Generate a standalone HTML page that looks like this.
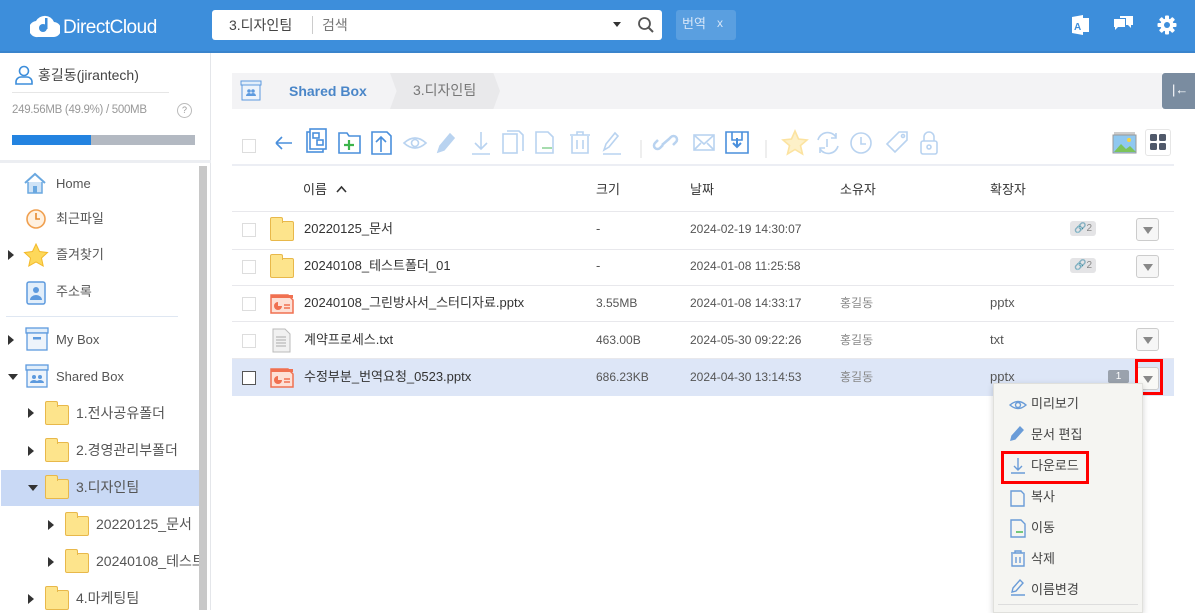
<!DOCTYPE html>
<html><head><meta charset="utf-8"><style>
*{box-sizing:border-box;margin:0;padding:0}
body{width:1195px;height:610px;overflow:hidden;background:#fff;font-family:"Liberation Sans","Noto Sans CJK KR",sans-serif;color:#333;position:relative;font-size:13px}
.abs{position:absolute}
.hdr{left:0;top:0;width:1195px;height:53px;background:#3d8edb;border-bottom:2px solid #3a84cc}
.search{left:212px;top:10px;width:450px;height:30px;background:#fff;border-radius:3px}
.side{left:0;top:53px;width:211px;height:557px;border-right:1px solid #e4e6ea}
.t{position:absolute;white-space:nowrap;line-height:1.15}
.row{position:absolute;left:232px;width:942px;border-bottom:1px solid #e8e8ec}
.cb{position:absolute;width:14px;height:14px;border:1px solid #ccc;background:#fff}
.dd{position:absolute;left:1136px;width:23px;height:23px;border:1px solid #ccc;border-radius:3px;background:#f6f6f6}
.dd:after{content:"";position:absolute;left:6px;top:8px;border-left:5px solid transparent;border-right:5px solid transparent;border-top:7px solid #888}
.fold{position:absolute;width:24px;height:20px;background:#fde48c;border:1px solid #e8b84a;border-radius:2px}
.fold:before{content:"";position:absolute;left:-1px;top:-5px;width:11px;height:5px;background:#fde48c;border:1px solid #e8b84a;border-bottom:none;border-radius:2px 2px 0 0}
.arr{position:absolute;border-top:5px solid transparent;border-bottom:5px solid transparent;border-left:6px solid #333}
.arrd{position:absolute;border-left:5px solid transparent;border-right:5px solid transparent;border-top:6px solid #333}
.mi{position:absolute;left:1031px;font-size:13px;color:#444;line-height:1.15}
</style></head><body>
<div class="abs hdr"></div>
<svg class="abs" style="left:30px;top:12px" width="30" height="26" viewBox="0 0 30 26"><path d="M8 25 A8 8 0 0 1 6 9 A10 10 0 0 1 24 10 A7 7 0 0 1 23 25 Z" fill="#fff"/><circle cx="13" cy="16" r="4" fill="#3d8edb"/><rect x="15" y="6" width="2.5" height="11" fill="#3d8edb"/></svg>
<div class="t" style="left:63px;top:17px;color:#fff;font-size:19px;letter-spacing:-0.5px">DirectCloud</div>
<div class="abs search"></div>
<div class="t" style="left:229px;top:17px;font-size:14px;color:#444">3.디자인팀</div>
<div class="abs" style="left:312px;top:16px;width:1px;height:18px;background:#ccc"></div>
<div class="t" style="left:322px;top:17px;font-size:14px;color:#777">검색</div>
<div class="arrd" style="left:613px;top:22px;border-top-width:5px;border-left-width:4px;border-right-width:4px"></div>
<svg class="abs" style="left:637px;top:16px" width="18" height="18"><circle cx="7.5" cy="7.5" r="5.5" fill="none" stroke="#555" stroke-width="1.8"/><path d="M11.5 11.5L16 16" stroke="#555" stroke-width="2"/></svg>
<div class="abs" style="left:676px;top:10px;width:60px;height:30px;background:#5a9fe0;border-radius:3px"></div>
<div class="t" style="left:682px;top:17px;color:#d6e6f8;font-size:13px">번역</div>
<div class="t" style="left:717px;top:17px;color:#d6e6f8;font-size:12px">x</div>
<svg class="abs" style="left:1069px;top:14px" width="22" height="22"><path d="M3 3L14 1V21L3 19Z" fill="#fff"/><rect x="14" y="4" width="6" height="14" fill="#fff"/><text x="5" y="16" font-size="10" font-weight="bold" fill="#3d8edb" font-family="Liberation Sans">A</text></svg>
<svg class="abs" style="left:1113px;top:15px" width="22" height="20"><path d="M1 4h11v8H5l-3 3v-3H1z" fill="#fff"/><path d="M7 1h13v9h-2v3l-3-3H13V3H7z" fill="#fff"/></svg>
<svg class="abs" style="left:1157px;top:15px" width="20" height="20" viewBox="0 0 20 20"><g fill="#fff"><circle cx="10" cy="10" r="6.5"/><rect x="8" y="0.5" width="4" height="19" rx="1"/><rect x="8" y="0.5" width="4" height="19" rx="1" transform="rotate(45 10 10)"/><rect x="8" y="0.5" width="4" height="19" rx="1" transform="rotate(90 10 10)"/><rect x="8" y="0.5" width="4" height="19" rx="1" transform="rotate(135 10 10)"/></g><circle cx="10" cy="10" r="3" fill="#3d8edb"/></svg>

<!-- sidebar -->
<div class="abs side"></div>
<svg class="abs" style="left:14px;top:65px" width="20" height="20"><circle cx="10" cy="6" r="4.5" fill="none" stroke="#3d8edb" stroke-width="1.6"/><path d="M2 19v-2a5 5 0 0 1 5-5h6a5 5 0 0 1 5 5v2z" fill="none" stroke="#3d8edb" stroke-width="1.6"/></svg>
<div class="t" style="left:38px;top:67px;font-size:14px;color:#444">홍길동(jirantech)</div>
<div class="abs" style="left:12px;top:92px;width:157px;height:1px;background:#e6e6e6"></div>
<div class="t" style="left:12px;top:104px;font-size:11.5px;color:#999;letter-spacing:-0.3px">249.56MB (49.9%) / 500MB</div>
<div class="abs" style="left:177px;top:103px;width:15px;height:15px;border:1px solid #bbb;border-radius:50%;font-size:9px;color:#999;text-align:center;line-height:13px">?</div>
<div class="abs" style="left:12px;top:135px;width:183px;height:10px;background:#b3b9c2"></div>
<div class="abs" style="left:12px;top:135px;width:79px;height:10px;background:#2383e0"></div>
<div class="abs" style="left:0;top:160px;width:211px;height:3px;background:#eceef2"></div>
<div class="abs" style="left:199px;top:166px;width:8px;height:444px;background:#c8c8c8"></div>
<svg class="abs" style="left:23px;top:172px" width="24" height="22"><path d="M2 11L12 2 22 11" fill="none" stroke="#6aa8e0" stroke-width="2"/><path d="M5 10v11h14V10" fill="#cfe3f6" stroke="#6aa8e0" stroke-width="1.5"/><rect x="10" y="14" width="4" height="7" fill="#6aa8e0"/></svg>
<div class="t" style="left:56px;top:177px;color:#555">Home</div>
<svg class="abs" style="left:25px;top:208px" width="22" height="22"><circle cx="11" cy="11" r="9" fill="#fff1e0" stroke="#f0a050" stroke-width="1.6"/><path d="M11 5v6h4" fill="none" stroke="#e58a2e" stroke-width="1.6"/></svg>
<div class="t" style="left:56px;top:212px;color:#555">최근파일</div>
<div class="arr" style="left:8px;top:250px"></div>
<svg class="abs" style="left:23px;top:243px" width="26" height="25"><path d="M13 1l3.5 7.5 8 1-6 5.5 1.7 8L13 19l-7.2 4 1.7-8-6-5.5 8-1z" fill="#fdd85a" stroke="#f3b92a"/></svg>
<div class="t" style="left:56px;top:248px;color:#555">즐겨찾기</div>
<svg class="abs" style="left:25px;top:281px" width="22" height="24"><rect x="2" y="1" width="18" height="22" rx="2" fill="#e2eefa" stroke="#5d9ade" stroke-width="1.5"/><circle cx="11" cy="9" r="3" fill="#5d9ade"/><path d="M5 19a6 5 0 0 1 12 0z" fill="#5d9ade"/></svg>
<div class="t" style="left:56px;top:285px;color:#555">주소록</div>
<div class="abs" style="left:6px;top:316px;width:172px;height:1px;background:#dfe7f2"></div>
<div class="arr" style="left:8px;top:335px"></div>
<svg class="abs" style="left:24px;top:327px" width="26" height="25"><rect x="2" y="1" width="22" height="5" fill="#e2eefa" stroke="#5d9ade" stroke-width="1.3"/><rect x="3" y="6" width="20" height="17" fill="#eef4fb" stroke="#5d9ade" stroke-width="1.3"/><rect x="9" y="10" width="8" height="2.5" fill="#5d9ade"/></svg>
<div class="t" style="left:56px;top:333px;color:#555">My Box</div>
<div class="arrd" style="left:8px;top:374px"></div>
<svg class="abs" style="left:24px;top:364px" width="26" height="25"><rect x="2" y="1" width="22" height="5" fill="#e2eefa" stroke="#5d9ade" stroke-width="1.3"/><rect x="3" y="6" width="20" height="17" fill="#eef4fb" stroke="#5d9ade" stroke-width="1.3"/><circle cx="10" cy="13" r="2" fill="#5d9ade"/><circle cx="16" cy="13" r="2" fill="#5d9ade"/><path d="M6 19a4 3 0 0 1 8 0zM12 19a4 3 0 0 1 8 0z" fill="#5d9ade"/></svg>
<div class="t" style="left:56px;top:370px;color:#555">Shared Box</div>
<div class="abs" style="left:1px;top:470px;width:198px;height:36px;background:#c9d9f5"></div>
<div class="arr" style="left:28px;top:408px"></div><div class="fold" style="left:45px;top:405px"></div><div class="t" style="left:76px;top:405px;color:#555;font-size:14px">1.전사공유폴더</div>
<div class="arr" style="left:28px;top:446px"></div><div class="fold" style="left:45px;top:442px"></div><div class="t" style="left:76px;top:442px;color:#555;font-size:14px">2.경영관리부폴더</div>
<div class="arrd" style="left:28px;top:485px"></div><div class="fold" style="left:45px;top:479px"></div><div class="t" style="left:76px;top:479px;color:#555;font-size:14px">3.디자인팀</div>
<div class="arr" style="left:48px;top:520px"></div><div class="fold" style="left:65px;top:516px"></div><div class="t" style="left:96px;top:516px;color:#555;font-size:14px">20220125_문서</div>
<div class="arr" style="left:48px;top:557px"></div><div class="fold" style="left:65px;top:553px"></div><div class="t" style="left:96px;top:553px;color:#555;font-size:14px;width:103px;overflow:hidden">20240108_테스트</div>
<div class="arr" style="left:28px;top:594px"></div><div class="fold" style="left:45px;top:590px"></div><div class="t" style="left:76px;top:590px;color:#555;font-size:14px">4.마케팅팀</div>

<!-- breadcrumb -->
<div class="abs" style="left:232px;top:73px;width:930px;height:36px;background:#f3f3f5"></div>
<div class="abs" style="left:390px;top:73px;width:110px;height:36px;background:#e9e9eb;clip-path:polygon(0 0,94% 0,100% 50%,94% 100%,0 100%,6% 50%)"></div>
<svg class="abs" style="left:240px;top:80px" width="22" height="22"><rect x="1" y="1" width="20" height="4" fill="#e2eefa" stroke="#5d9ade"/><rect x="2" y="5" width="18" height="15" fill="#eef4fb" stroke="#5d9ade"/><circle cx="9" cy="11" r="1.8" fill="#5d9ade"/><circle cx="13" cy="11" r="1.8" fill="#5d9ade"/><path d="M6 16a3 3 0 0 1 6 0zM10 16a3 3 0 0 1 6 0z" fill="#5d9ade"/></svg>
<div class="t" style="left:289px;top:83px;font-size:14px;font-weight:bold;color:#4a86c8">Shared Box</div>
<div class="t" style="left:413px;top:82px;font-size:14px;color:#777">3.디자인팀</div>
<div class="abs" style="left:1162px;top:73px;width:33px;height:36px;background:#7a8ca0;border-radius:3px 0 0 3px"></div>
<div class="t" style="left:1172px;top:83px;color:#fff;font-size:13px">|←</div>

<!-- toolbar -->
<div class="cb" style="left:242px;top:139px;border-color:#ddd"></div>
<svg class="abs" style="left:270px;top:128px" width="680" height="30" fill="none" stroke-width="1.6">
<path d="M6 15h16M6 15l6-6M6 15l6 6" stroke="#4a8fdc"/>
<g stroke="#4a8fdc"><rect x="37" y="4" width="16" height="20"/><rect x="40" y="1" width="16" height="20" fill="#fff"/><rect x="43" y="5" width="6" height="5"/><rect x="47" y="12" width="6" height="5"/></g>
<g stroke="#4a8fdc"><path d="M69 5h8l2 3h11v17H69z"/><path d="M79 12v10M74 17h10" stroke="#3cb44b" stroke-width="2.2"/></g>
<g stroke="#4a8fdc"><path d="M102 4h15l4 4v18h-19z"/><path d="M111 24V9M106 14l5-5 5 5"/></g>
<g stroke="#b9d3f0"><path d="M134 15q11-10 22 0q-11 10-22 0z"/><circle cx="145" cy="15" r="3.5"/></g>
<path d="M168 24l2-6 10-12 4 4-10 12z" fill="#b9d3f0" stroke="#b9d3f0"/>
<g stroke="#b9d3f0"><path d="M211 4v17M205 15l6 6 6-6M202 26h18"/></g>
<g stroke="#b9d3f0"><rect x="233" y="6" width="14" height="19"/><path d="M237 3h12l4 4v16"/></g>
<g stroke="#b9d3f0"><path d="M266 4h12l5 5v16h-17z"/><path d="M272 20h10" stroke="#8fd49a"/></g>
<g stroke="#b9d3f0"><path d="M300 7h20M307 7V4h6v3M302 8v17h16V8M307 12v9M313 12v9"/></g>
<path d="M334 22l2-6 9-11 3 3-9 11zM333 26h18" stroke="#b9d3f0"/>
<path d="M371 12v18" stroke="#ddd" stroke-width="1"/>
<g stroke="#b9d3f0" stroke-width="2.5"><path d="M393 17l-3 3a3 3 0 0 1-5-5l3-3M398 12l3-3a3 3 0 0 1 5 5l-3 3M392 17l7-6"/></g>
<g stroke="#b9d3f0"><rect x="424" y="7" width="20" height="15"/><path d="M424 7l10 9 10-9M424 22l7-7M444 22l-7-7"/></g>
<g stroke="#4a8fdc"><path d="M456 4h22v21h-22z"/><path d="M462 4v8h10V4" /><path d="M467 10v9M463 15l4 4 4-4" stroke-width="2"/></g>
<path d="M496 12v18" stroke="#ddd" stroke-width="1"/>
<path d="M525 3l3.5 8 8.5 1-6.5 5.5 2 8.5-7.5-4.5-7.5 4.5 2-8.5-6.5-5.5 8.5-1z" fill="#fdf0c8" stroke="#fce3a0"/>
<g stroke="#b9d3f0"><path d="M548 12a10 10 0 0 1 18-3M568 18a10 10 0 0 1-18 3M566 5v5h-5M550 25v-5h5"/><path d="M557 11v8" /></g>
<g stroke="#b9d3f0"><circle cx="591" cy="15" r="10"/><path d="M591 9v7h5"/></g>
<g stroke="#b9d3f0"><path d="M617 16l12-12h8v8l-12 12z"/><circle cx="633" cy="8" r="1.5"/></g>
<g stroke="#b9d3f0"><rect x="651" y="13" width="16" height="13" rx="2"/><path d="M654 13V9a5 5 0 0 1 10 0v4"/><circle cx="659" cy="19" r="2"/></g>
</svg>
<svg class="abs" style="left:1112px;top:131px" width="26" height="24"><rect x="2" y="1" width="21" height="3" fill="#ccc"/><rect x="1" y="4" width="23" height="18" fill="#8fc8f0" stroke="#999"/><path d="M2 21l7-8 5 5 4-3 6 6z" fill="#7cc35a"/><circle cx="17" cy="9" r="2" fill="#f5d442"/></svg>
<div class="abs" style="left:1145px;top:129px;width:26px;height:27px;border:1px solid #e6e6e6;border-radius:3px"></div>
<svg class="abs" style="left:1150px;top:134px" width="16" height="16"><rect x="0" y="0" width="7" height="7" rx="1.5" fill="#50596a"/><rect x="9" y="0" width="7" height="7" rx="1.5" fill="#50596a"/><rect x="0" y="9" width="7" height="7" rx="1.5" fill="#50596a"/><rect x="9" y="9" width="7" height="7" rx="1.5" fill="#50596a"/></svg>
<div class="abs" style="left:232px;top:164px;width:942px;height:2px;background:#eceef4"></div>

<!-- table header -->
<div class="t" style="left:303px;top:183px;color:#333">이름</div>
<svg class="abs" style="left:336px;top:185px" width="11" height="8"><path d="M1 7l4.5-5 4.5 5" fill="none" stroke="#333" stroke-width="1.6"/></svg>
<div class="t" style="left:596px;top:183px;color:#333">크기</div>
<div class="t" style="left:690px;top:183px;color:#333">날짜</div>
<div class="t" style="left:840px;top:183px;color:#333">소유자</div>
<div class="t" style="left:990px;top:183px;color:#333">확장자</div>
<div class="abs" style="left:232px;top:211px;width:942px;height:1px;background:#e8e8ec"></div>

<!-- rows -->
<div class="row" style="top:212px;height:38px"></div>
<div class="row" style="top:250px;height:36px"></div>
<div class="row" style="top:286px;height:36px"></div>
<div class="row" style="top:322px;height:37px"></div>
<div class="row" style="top:359px;height:37px;background:#dde6f7;border-bottom:none"></div>

<div class="cb" style="left:242px;top:223px;border-color:#ddd"></div>
<div class="fold" style="left:270px;top:221px"></div>
<div class="t" style="left:304px;top:222px">20220125_문서</div>
<div class="t" style="left:596px;top:222px;color:#555">-</div>
<div class="t" style="left:690px;top:223px;color:#555;font-size:12px">2024-02-19 14:30:07</div>
<div class="abs" style="left:1070px;top:221px;width:26px;height:15px;background:#e4e4e6;border-radius:3px;font-size:10px;color:#888;line-height:15px;padding-left:4px">🔗2</div>
<div class="dd" style="top:218px"></div>

<div class="cb" style="left:242px;top:260px;border-color:#ddd"></div>
<div class="fold" style="left:270px;top:258px"></div>
<div class="t" style="left:304px;top:259px">20240108_테스트폴더_01</div>
<div class="t" style="left:596px;top:259px;color:#555">-</div>
<div class="t" style="left:690px;top:260px;color:#555;font-size:12px">2024-01-08 11:25:58</div>
<div class="abs" style="left:1070px;top:258px;width:26px;height:15px;background:#e4e4e6;border-radius:3px;font-size:10px;color:#888;line-height:15px;padding-left:4px">🔗2</div>
<div class="dd" style="top:255px"></div>

<svg width="0" height="0" style="position:absolute"><defs><g id="ppt"><path d="M1 2h17l5 5v13H1z" fill="#fde0d6" stroke="#f07050" stroke-width="1.5"/><rect x="1" y="2" width="22" height="3" fill="#f07050"/><path d="M8 9a4 4 0 1 0 4 4h-4z" fill="#f07050"/><path d="M14 12h6M14 15h6" stroke="#f07050" stroke-width="1.5"/></g></defs></svg>
<div class="cb" style="left:242px;top:297px;border-color:#ddd"></div>
<svg class="abs" style="left:270px;top:293px" width="25" height="22"><use href="#ppt"/></svg>
<div class="t" style="left:304px;top:296px">20240108_그린방사서_스터디자료.pptx</div>
<div class="t" style="left:596px;top:297px;color:#555;font-size:12px">3.55MB</div>
<div class="t" style="left:690px;top:297px;color:#555;font-size:12px">2024-01-08 14:33:17</div>
<div class="t" style="left:840px;top:297px;color:#888;font-size:12px">홍길동</div>
<div class="t" style="left:990px;top:296px;color:#555">pptx</div>

<div class="cb" style="left:242px;top:334px;border-color:#ddd"></div>
<svg class="abs" style="left:272px;top:328px" width="20" height="25"><path d="M1 1h12l5 5v18H1z" fill="#f1f1f1" stroke="#bbb"/><path d="M4 9h10M4 12h10M4 15h10M4 18h10" stroke="#aaa"/></svg>
<div class="t" style="left:304px;top:333px">계약프로세스.txt</div>
<div class="t" style="left:596px;top:334px;color:#555;font-size:12px">463.00B</div>
<div class="t" style="left:690px;top:334px;color:#555;font-size:12px">2024-05-30 09:22:26</div>
<div class="t" style="left:840px;top:334px;color:#888;font-size:12px">홍길동</div>
<div class="t" style="left:990px;top:333px;color:#555">txt</div>
<div class="dd" style="top:328px"></div>

<div class="cb" style="left:242px;top:371px;border-color:#555"></div>
<svg class="abs" style="left:270px;top:367px" width="25" height="22"><use href="#ppt"/></svg>
<div class="t" style="left:304px;top:370px">수정부분_번역요청_0523.pptx</div>
<div class="t" style="left:596px;top:371px;color:#555;font-size:12px">686.23KB</div>
<div class="t" style="left:690px;top:371px;color:#555;font-size:12px">2024-04-30 13:14:53</div>
<div class="t" style="left:840px;top:371px;color:#888;font-size:12px">홍길동</div>
<div class="t" style="left:990px;top:370px;color:#555">pptx</div>
<div class="abs" style="left:1108px;top:370px;width:21px;height:13px;background:#9aa2ad;border-radius:2px;font-size:10px;color:#fff;text-align:center;line-height:13px">1</div>
<div class="dd" style="top:367px;background:#f9f9f6"></div>
<div class="abs" style="left:1135px;top:359px;width:28px;height:36px;border:3px solid #f00"></div>

<!-- dropdown menu -->
<div class="abs" style="left:993px;top:383px;width:150px;height:230px;background:#f5f5f2;border:1px solid #e0e0dc;box-shadow:0 2px 6px rgba(0,0,0,.18)"></div>
<svg class="abs" style="left:1008px;top:396px" width="20" height="210" fill="none" stroke="#6a9cd8" stroke-width="1.4">
<path d="M2 9q8-7 16 0q-8 7-16 0z"/><circle cx="10" cy="9" r="2.5"/>
<path d="M3 44l1-4 8-9 3 3-8 9z" fill="#6a9cd8"/>
<path d="M10 62v12M6 70l4 4 4-4M3 77h14"/>
<path d="M3 95h10l3 3v12H3z"/>
<path d="M3 124h10l4 4v13H3z"/><path d="M8 136h7" stroke="#3cb44b"/>
<path d="M3 157h14M7 157v-2h6v2M4 158v12h12v-12M8 161v6M12 161v6"/>
<path d="M4 196l1-4 7-8 3 3-7 8zM3 199h14"/>
</svg>
<div class="mi" style="top:397px">미리보기</div>
<div class="mi" style="top:428px">문서 편집</div>
<div class="mi" style="top:459px">다운로드</div>
<div class="abs" style="left:1001px;top:451px;width:88px;height:33px;border:3px solid #f00"></div>
<div class="mi" style="top:490px">복사</div>
<div class="mi" style="top:521px">이동</div>
<div class="mi" style="top:552px">삭제</div>
<div class="mi" style="top:583px">이름변경</div>
<div class="abs" style="left:998px;top:604px;width:140px;height:1px;background:#ddd"></div>
</body></html>
